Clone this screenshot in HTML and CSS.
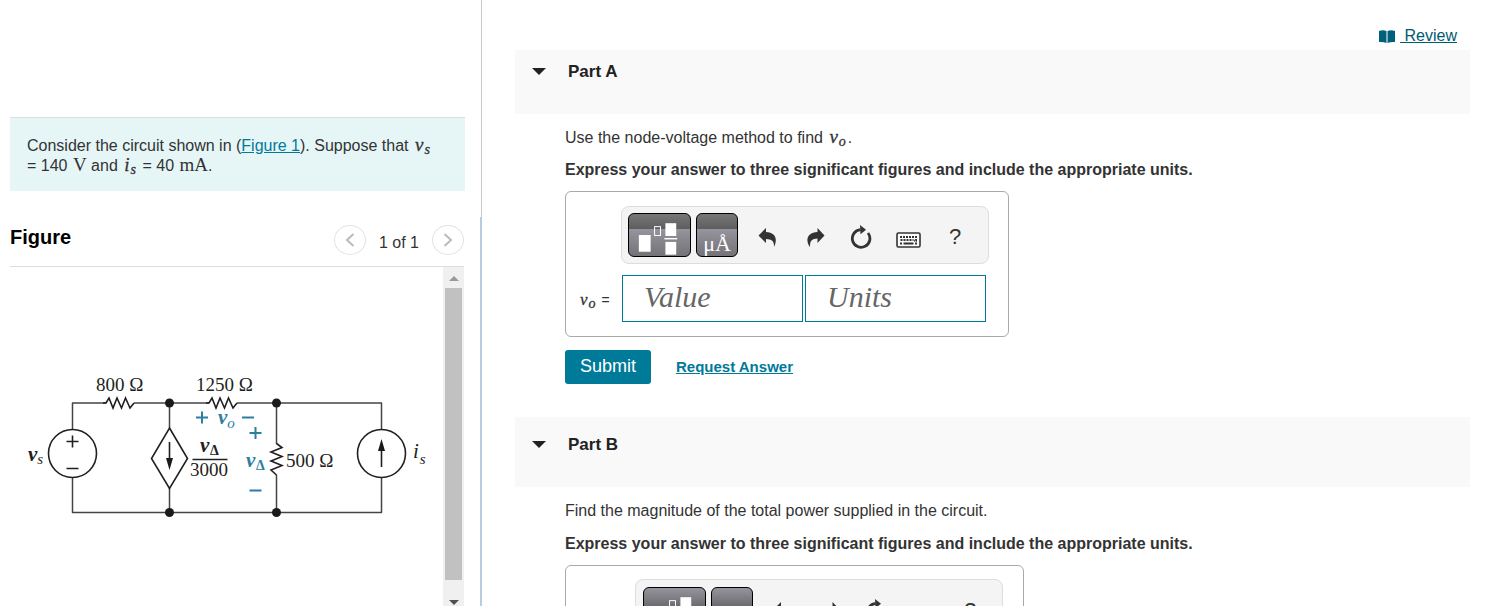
FILE: index.html
```html
<!DOCTYPE html>
<html lang="en">
<head>
<meta charset="utf-8">
<title>Node-voltage method</title>
<link rel="stylesheet" href="styles.css">
</head>
<body>
<svg class="sprite" aria-hidden="true">
  <defs>
    <symbol id="i-template" viewBox="0 0 62 42">
      <rect x="10" y="21" width="12" height="17" fill="#fff"/>
      <rect x="26" y="12.500" width="6" height="9" fill="none" stroke="#fff"/>
      <rect x="37" y="9" width="11" height="13" fill="#fff"/>
      <rect x="36" y="24" width="13" height="1.500" fill="#fff"/>
      <rect x="37" y="28" width="11" height="13" fill="#fff"/>
    </symbol>
    <symbol id="i-undo" viewBox="0 0 18 20">
      <path d="M0.500 8.500 8 1v4c6.500.3 9.800 3.500 9.800 8 0 2.500-.6 4.700-1.700 6.800.1-5.700-2.200-7.800-8.100-7.900V16z" fill="#333"/>
    </symbol>
    <symbol id="i-redo" viewBox="0 0 18 20">
      <path d="M17.500 8.500 10.500 1v4C4 5.300.4 8.500.4 13c0 2.500.8 5 2.700 7.200-.6-6 1.700-8.600 7.400-8.800V16z" fill="#333"/>
    </symbol>
    <symbol id="i-reset" viewBox="0 0 22 24">
      <path d="M10.500 4.700a8.800 8.800 0 1 0 7.500 3.300" fill="none" stroke="#333" stroke-width="2.800"/>
      <path d="M10 0 16 4.700 10.500 9.200z" fill="#333"/>
    </symbol>
    <symbol id="i-keyboard" viewBox="0 0 25 16">
      <rect x="1" y="1" width="23" height="14" rx="1.500" fill="#fbfbfb" stroke="#333" stroke-width="1.600"/>
      <path d="M4 5h15M4.500 8h13M20 4v4.800h-2" fill="none" stroke="#333" stroke-width="2" stroke-dasharray="2 1"/>
      <path d="M4 11.500h2M7.500 11.500h10M19 11.500h2" stroke="#333" stroke-width="2"/>
    </symbol>
  </defs>
</svg>

<main class="page">
  <section class="side" aria-label="Problem">
    <p class="intro">Consider the circuit shown in (<a href="#figure">Figure 1</a>). Suppose that <i class="var">v<sub>s</sub></i> =&nbsp;140&nbsp;<span class="unit">V</span> and <i class="var">i<sub>s</sub></i> = 40 <span class="unit">mA</span>.</p>

    <header class="figure-head">
      <h2>Figure</h2>
      <nav class="pager" aria-label="Figures">
        <button type="button" aria-label="Previous figure"><svg width="10" height="14" viewBox="0 0 10 14"><path d="M8.500 1 2 7l6.500 6"/></svg></button>
        <span>1 of 1</span>
        <button type="button" aria-label="Next figure"><svg width="10" height="14" viewBox="0 0 10 14"><path d="M1.500 1 8 7l-6.500 6"/></svg></button>
      </nav>
    </header>

    <div class="figure-body" id="figure">
      <div class="figure-view">
        <svg class="circuit" viewBox="20 370 420 150" width="420" height="150" role="img" aria-label="Circuit diagram">
          <g class="wire">
            <path d="M72.500 430v-27H106M134 403H209M237 403H381.500v27M72.500 477v35.500h309V477"/>
            <path d="M169.500 403v25M169.500 488v24M276.500 403v41M276.500 475v37"/>
          </g>
          <g class="part">
            <path d="M103 403h3l3-5 4 10 4-10 4.500 10 4-10 4.500 10 4-5M206 403h3l3-5 4 10 4-10 4.500 10 4-10 4.500 10 4-5M276.500 443.500l5.500 4-11 4.500 11 4.500-11 4.500 11 4.500-11 4.500 5.500 5"/>
            <circle cx="72.500" cy="453.500" r="24"/>
            <circle cx="381.500" cy="453.500" r="24"/>
            <path d="M169.500 428 187.500 458.500 169.500 488.500 151.500 458.500z"/>
            <path d="M66.500 441.500h12M72.500 435.500v12M66.500 468.500h12M169.500 442v20M381.500 467v-20"/>
            <path d="M192.500 459.500h35"/>
          </g>
          <g class="solid">
            <circle cx="169.500" cy="403" r="4.500"/><circle cx="276.500" cy="403" r="4.500"/>
            <circle cx="169.500" cy="512.500" r="4.500"/><circle cx="276.500" cy="512.500" r="4.500"/>
            <path d="M166 458h7l-3.500 12zM378 451h7l-3.500-12z"/>
          </g>
          <g class="polarity"><path d="M196 417.500h12M202 411.500v12M242 417.500h12M249.500 433h12M255.500 427v12M249.500 490.500h12"/></g>
          <g class="lettering">
            <text x="96" y="391">800 Ω</text>
            <text x="196" y="391">1250 Ω</text>
            <text x="286" y="467">500 Ω</text>
            <text x="190" y="476">3000</text>
            <text x="28" y="461" class="sym bold">v<tspan class="low" dy="3">s</tspan></text>
            <text x="413" y="458" class="sym">i<tspan class="low" dx="1" dy="6">s</tspan></text>
            <text x="200" y="452" class="sym bold">v</text><text x="210" y="455" class="delta">Δ</text>
            <text x="218" y="424" class="sym bold blue">v<tspan class="low" dy="4">o</tspan></text>
            <text x="246" y="467" class="sym bold blue">v</text><text x="256" y="470" class="delta blue">Δ</text>
          </g>
        </svg>
      </div>
      <div class="scroller" aria-hidden="true">
        <span class="arrow up"></span>
        <span class="thumb"></span>
        <span class="arrow down"></span>
      </div>
    </div>
  </section>

  <section class="work" aria-label="Answers">
    <div class="review"><svg width="16" height="13" viewBox="0 0 16 13"><path d="M0 1Q4-.5 7.500 1v12Q4 11.500 0 12zM16 1Q12-.5 8.500 1v12Q12 11.500 16 12z" fill="#00617a"/></svg><a href="#review">&nbsp;Review</a></div>

    <article>
      <header class="part-head"><span class="caret"></span><h2>Part A</h2></header>
      <div class="part-body">
        <p>Use the node-voltage method to find <i class="var">v<sub>o</sub></i>.</p>
        <p><strong>Express your answer to three significant figures and include the appropriate units.</strong></p>
        <form class="answer">
          <div class="tools">
            <button type="button" class="key wide" aria-label="Templates"><svg width="61" height="42"><use href="#i-template"/></svg></button>
            <button type="button" class="key symbols" aria-label="Symbols">μÅ</button>
            <button type="button" class="tool undo" aria-label="Undo"><svg width="18" height="20"><use href="#i-undo"/></svg></button>
            <button type="button" class="tool redo" aria-label="Redo"><svg width="18" height="20"><use href="#i-redo"/></svg></button>
            <button type="button" class="tool reset" aria-label="Reset"><svg width="22" height="24"><use href="#i-reset"/></svg></button>
            <button type="button" class="tool keyboard" aria-label="Keyboard shortcuts"><svg width="25" height="16"><use href="#i-keyboard"/></svg></button>
            <button type="button" class="tool help" aria-label="Help">?</button>
          </div>
          <label for="value-a"><i class="var">v<sub>o</sub></i> =</label>
          <div class="fields">
            <input id="value-a" type="text" placeholder="Value">
            <input type="text" placeholder="Units" aria-label="Units">
          </div>
        </form>
        <div class="actions">
          <button type="button" class="submit">Submit</button>
          <a href="#request">Request Answer</a>
        </div>
      </div>
    </article>

    <article class="later">
      <header class="part-head"><span class="caret"></span><h2>Part B</h2></header>
      <div class="part-body">
        <p>Find the magnitude of the total power supplied in the circuit.</p>
        <p><strong>Express your answer to three significant figures and include the appropriate units.</strong></p>
        <form class="answer">
          <div class="tools">
            <button type="button" class="key wide" aria-label="Templates"><svg width="61" height="42"><use href="#i-template"/></svg></button>
            <button type="button" class="key symbols" aria-label="Symbols">μÅ</button>
            <button type="button" class="tool undo" aria-label="Undo"><svg width="18" height="20"><use href="#i-undo"/></svg></button>
            <button type="button" class="tool redo" aria-label="Redo"><svg width="18" height="20"><use href="#i-redo"/></svg></button>
            <button type="button" class="tool reset" aria-label="Reset"><svg width="22" height="24"><use href="#i-reset"/></svg></button>
            <button type="button" class="tool keyboard" aria-label="Keyboard shortcuts"><svg width="25" height="16"><use href="#i-keyboard"/></svg></button>
            <button type="button" class="tool help" aria-label="Help">?</button>
          </div>
        </form>
      </div>
    </article>
  </section>
</main>
</body>
</html>
```

FILE: styles.css
```css
* { box-sizing: border-box; }
body {
  margin: 0;
  height: 100vh;
  overflow: hidden;
  background: #fff;
  color: #333;
  font: 16px/20px "Liberation Sans", Arial, sans-serif;
}
h2, p { margin: 0; }
a { color: #007a99; text-decoration: underline; }
button { margin: 0; padding: 0; font: inherit; cursor: pointer; }
.sprite { position: absolute; width: 0; height: 0; }

.page {
  display: grid;
  grid-template-columns: 241fr 504fr;
  height: 100vh;
}

/* Problem column */
.side {
  display: flex;
  flex-direction: column;
  min-width: 0;
  min-height: 0;
  padding: 117px 17px 0 10px;
  background:
    linear-gradient(#b8cbe0, #b8cbe0) right 217px / 2px 100% no-repeat,
    linear-gradient(#c8c8c8, #c8c8c8) right 0 / 1px 100% no-repeat;
}
.intro {
  padding: 18px 17px 15px;
  border-top: 1px solid #d3e3e3;
  background: #e6f6f7;
}
.var, .unit {
  font-family: "Liberation Serif", "Times New Roman", serif;
  font-size: 19px;
  line-height: 16px;
}
.var { margin: 0 2px; white-space: nowrap; -webkit-text-stroke: 0.3px; }
.unit { margin-left: 1px; }
.var sub { margin-left: 1px; font-size: 14px; vertical-align: -3px; line-height: 12px; }

.figure-head {
  display: flex;
  justify-content: space-between;
  align-items: flex-start;
  margin-right: 1px;
  padding: 34px 0 11px;
  border-bottom: 1px solid #ddd;
}
.figure-head h2 { color: #000; font-size: 20px; line-height: 24px; }
.pager { display: flex; align-items: center; gap: 13px; }
.pager span { padding-top: 5px; }
.pager button {
  display: grid;
  place-items: center;
  width: 32px;
  height: 30px;
  border: 1px solid #e2e2e2;
  border-radius: 50%;
  background: #fff;
}
.pager path { fill: none; stroke: #bbb; stroke-width: 2; }

.figure-body { display: flex; flex: 1; min-height: 0; margin-right: 1px; }
.figure-view { flex: 1; min-width: 0; padding: 103px 0 0 10px; overflow: hidden; }
.circuit { display: block; max-width: 100%; }
.wire { fill: none; stroke: #444; stroke-width: 1.5; stroke-linejoin: round; }
.part { fill: none; stroke: #231f20; stroke-width: 1.6; }
.solid { fill: #1a1a1a; }
.polarity { stroke: #2a7f9f; stroke-width: 2; }
.lettering { fill: #231f20; font: 19px "Liberation Serif", "Times New Roman", serif; }
.lettering .sym { font-size: 21px; font-style: italic; }
.lettering .bold { font-weight: bold; }
.lettering .low { font-size: 15px; font-weight: normal; }
.lettering .delta { font-size: 14px; font-weight: bold; }
.lettering .blue { fill: #2a7f9f; }

.scroller {
  display: flex;
  flex-direction: column;
  width: 21px;
  padding: 0 2px 1px;
  background: #f0f0f0;
}
.thumb { flex: 1; background: #c1c1c1; }
.arrow { display: flex; justify-content: center; }
.arrow::before { content: ""; border: 5px solid transparent; }
.arrow.up { height: 21px; align-items: flex-start; padding-top: 4px; }
.arrow.up::before { border-bottom-color: #999; }
.arrow.down { height: 25px; align-items: flex-start; padding-top: 20px; }
.arrow.down::before { border-top-color: #505050; border-bottom: 0; }

/* Answer column */
.work { min-width: 0; padding: 26px 20px 0 33px; overflow: hidden; }
.review {
  display: flex;
  justify-content: flex-end;
  align-items: center;
  gap: 5px;
  padding: 0 13px 4px 0;
}
.review a { color: #005a70; }
.part-head {
  display: flex;
  align-items: flex-start;
  gap: 22px;
  height: 64px;
  padding: 12px 17px;
  background: #f9f9f9;
}
.part-head h2 { color: #222; font-size: 17px; line-height: 20px; }
.caret {
  margin-top: 6px;
  border: 7px solid transparent;
  border-top: 7px solid #222;
  border-bottom: 0;
}
.part-body { padding: 14px 50px 33px; }
.part-body p { margin-bottom: 12px; }
.part-body p + p { margin-bottom: 11px; }
.answer {
  display: grid;
  grid-template-columns: 41px 368px;
  row-gap: 11px;
  width: fit-content;
  padding: 14px 19px 14px 14px;
  border: 1px solid #aaa;
  border-radius: 6px;
}
.tools {
  grid-column: 2;
  display: flex;
  align-items: flex-start;
  height: 58px;
  padding: 6px;
  border: 1px solid #ddd;
  border-radius: 8px;
  background: #f4f4f4;
}
.key {
  width: 42px;
  height: 44px;
  border: 1px solid #000;
  border-radius: 6px;
  background: linear-gradient(#777, #5e5e5e 15px, #96949c 15px, #747378);
  color: #fff;
  overflow: hidden;
}
.key.wide { width: 63px; margin-right: 5px; }
.key svg { display: block; }
.symbols {
  padding-top: 18px;
  font: 22px/24px "Liberation Serif", "Times New Roman", serif;
}
.tool {
  display: grid;
  place-items: center;
  height: 48px;
  border: 0;
  background: none;
  color: #333;
}
.undo { margin-left: 20px; }
.redo { margin-left: 31px; }
.reset { margin-left: 25px; }
.keyboard { margin-left: 24px; height: 54px; }
.help { margin-left: 28px; font-size: 22px; }
.answer label { align-self: center; padding-top: 2px; font-size: 14px; }
.answer .var { margin: 0 2px 0 0; font-size: 17px; }
.fields { display: flex; gap: 2px; padding: 0 3px 0 1px; }
.fields input {
  flex: 1;
  min-width: 0;
  height: 47px;
  padding: 0 21px 3px;
  border: 1px solid #007a99;
  border-radius: 0;
  background: #fff;
  color: #333;
  font: italic 30px "Liberation Serif", "Times New Roman", serif;
}
.fields input::placeholder { color: #666; opacity: 1; }
.actions { display: flex; align-items: center; gap: 25px; margin-top: 13px; }
.submit {
  width: 86px;
  height: 34px;
  padding-bottom: 2px;
  border: 0;
  border-radius: 3px;
  background: #007a99;
  color: #fff;
  font-size: 18px;
}
.actions a { padding-bottom: 1px; font-size: 15px; font-weight: bold; }

.later .part-head { height: 70px; padding-top: 18px; }
.later .part-body p:first-child { margin-bottom: 13px; }
.later .answer { grid-template-columns: 55px 368px; padding: 13px 20px 14px 14px; }
.later .tools { padding: 7px; }
.later .key { background: linear-gradient(#96949c, #68676c 20px); }
```
